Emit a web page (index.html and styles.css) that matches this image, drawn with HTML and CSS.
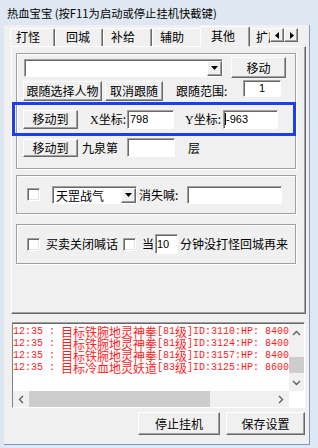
FILE: index.html
```html
<!DOCTYPE html>
<html lang="zh-CN">
<head>
    <meta charset="UTF-8">
    <title>热血宝宝</title>
    <link rel="stylesheet" href="styles.css">
</head>
<body>
    <div class="window">
        <div class="titlebar">热血宝宝 (按F11为启动或停止挂机快截键)</div>
        <div class="client">
            <div class="tabs">
                <div class="tab t1">打怪</div>
                <div class="tab t2">回城</div>
                <div class="tab t3">补给</div>
                <div class="tab t4">辅助</div>
                <div class="tab active">其他</div>
                <div class="tab t6">扩展</div>
                <div class="spin">
                    <span class="spin-btn"><svg width="5" height="7" viewBox="0 0 5 7"><path d="M4 0v7L0 3.5z" fill="#000"/></svg></span>
                    <span class="spin-btn"><svg width="5" height="7" viewBox="0 0 5 7"><path d="M1 0v7l4-3.5z" fill="#000"/></svg></span>
                </div>
            </div>

            <div class="panel">
                <div class="group g1">
                    <div class="row r1">
                        <div class="combo c-main">
                            <span class="combo-text"></span>
                            <span class="drop"><svg width="7" height="4" viewBox="0 0 7 4"><path d="M0 0h7L3.5 4z" fill="#000"/></svg></span>
                        </div>
                        <button class="btn b-move">移动</button>
                    </div>

                    <div class="row r2">
                        <button class="btn b-follow">跟随选择人物</button>
                        <button class="btn b-cancel">取消跟随</button>
                        <span class="label l-range">跟随范围:</span>
                        <span class="edit e-range">1</span>
                    </div>

                    <div class="row r3">
                        <button class="btn b-goto">移动到</button>
                        <span class="label l-x"><i>X</i>坐标:</span>
                        <span class="edit e-x">798</span>
                        <span class="label l-y"><i>Y</i>坐标:</span>
                        <span class="edit e-y"><b class="caret"></b>-963</span>
                    </div>

                    <div class="row r4">
                        <button class="btn b-goto2">移动到</button>
                        <span class="label l-floor">九泉第</span>
                        <span class="edit e-floor"></span>
                        <span class="label l-ceng">层</span>
                    </div>
                </div>

                <div class="group g2">
                    <span class="check c1"></span>
                    <div class="combo c-skill">
                        <span class="combo-text">天罡战气</span>
                        <span class="drop"><svg width="7" height="4" viewBox="0 0 7 4"><path d="M0 0h7L3.5 4z" fill="#000"/></svg></span>
                    </div>
                    <span class="label l-shout">消失喊:</span>
                    <span class="edit e-shout"></span>
                </div>

                <div class="group g3">
                    <span class="check c2"></span>
                    <span class="label l-trade">买卖关闭喊话</span>
                    <span class="check c3"></span>
                    <span class="label l-when">当</span>
                    <span class="edit e-min">10</span>
                    <span class="label l-back">分钟没打怪回城再来</span>
                </div>
            </div>

            <div class="log">
                <div class="log-inner">
                    <div class="lines">
                        <div class="line">12:35 : <span class="cn">目标铁腕地灵神拳</span>[81<span class="cn">级</span>]ID:3110:HP: 8400</div>
                        <div class="line">12:35 : <span class="cn">目标铁腕地灵神拳</span>[81<span class="cn">级</span>]ID:3124:HP: 8400</div>
                        <div class="line">12:35 : <span class="cn">目标铁腕地灵神拳</span>[81<span class="cn">级</span>]ID:3157:HP: 8400</div>
                        <div class="line">12:35 : <span class="cn">目标冷血地灵妖道</span>[83<span class="cn">级</span>]ID:3125:HP: 8600</div>
                    </div>
                    <div class="vscroll">
                        <span class="arrow"><svg width="9" height="6" viewBox="0 0 9 6"><path d="M1 5l3.5-3.5L8 5" fill="none" stroke="#606060" stroke-width="1.4"/></svg></span>
                        <span class="track t-top"></span>
                        <span class="thumb"></span>
                        <span class="track t-fill"></span>
                        <span class="arrow"><svg width="9" height="6" viewBox="0 0 9 6"><path d="M1 1l3.5 3.5L8 1" fill="none" stroke="#606060" stroke-width="1.4"/></svg></span>
                    </div>
                    <div class="hscroll">
                        <span class="arrow"><svg width="6" height="9" viewBox="0 0 6 9"><path d="M5 1L1.5 4.5 5 8" fill="none" stroke="#606060" stroke-width="1.4"/></svg></span>
                        <span class="thumb"></span>
                        <span class="track t-fill"></span>
                        <span class="arrow"><svg width="6" height="9" viewBox="0 0 6 9"><path d="M1 1l3.5 3.5L1 8" fill="none" stroke="#606060" stroke-width="1.4"/></svg></span>
                    </div>
                    <div class="corner"></div>
                </div>
            </div>

            <div class="actions">
                <button class="btn b-stop">停止挂机</button>
                <button class="btn b-save">保存设置</button>
            </div>
        </div>
    </div>
</body>
</html>
```

FILE: styles.css
```css
* {
    box-sizing: border-box;
}
body {
    margin: 0;
    width: 318px;
    height: 448px;
    overflow: hidden;
    background: #dfe8f2;
    font-family: "Noto Sans CJK SC", sans-serif;
    font-size: 12px;
    color: #000;
}
.window {
    display: flex;
    flex-direction: column;
    height: 448px;
}
.titlebar {
    height: 25px;
    padding-left: 7px;
    line-height: 27px;
    font-size: 11.3px;
    white-space: nowrap;
}
.client {
    flex: 1;
    margin: 0 8px 3px 4px;
    background: #f0f0f0;
    border-right: 1px solid #7a9cc4;
    border-bottom: 1px solid #7a9cc4;
    display: flex;
    flex-direction: column;
}

/* tabs */
.tabs {
    display: flex;
    align-items: flex-end;
    height: 21px;
    padding-left: 6px;
}
.tab {
    height: 18px;
    line-height: 16px;
    padding-left: 6px;
    background: #f0f0f0;
    border: 1px solid;
    border-color: #fff #696969 transparent #fff;
    border-bottom: 0;
    border-radius: 2px 2px 0 0;
    box-shadow: inset -1px 0 #a0a0a0;
    white-space: nowrap;
    overflow: hidden;
}
.t1 { width: 45px; padding-left: 5px; }
.t2 { width: 48px; padding-left: 10px; }
.t3 { width: 49px; padding-left: 7px; }
.t4 { width: 50px; padding-left: 7px; }
.t6 { width: 22px; padding-left: 7px; box-shadow: none; border-right: 0; }
.tab.active {
    position: relative;
    z-index: 1;
    width: 50px;
    height: 21px;
    line-height: 18px;
    margin: 0 -2px -1px;
    padding-left: 10px;
    border-bottom: 1px solid #f0f0f0;
}
.spin {
    display: flex;
    margin-bottom: 4px;
}
.spin-btn {
    width: 14px;
    height: 14px;
    display: flex;
    align-items: center;
    justify-content: center;
    background: #f0f0f0;
    border: 1px solid;
    border-color: #fff #696969 #696969 #fff;
    box-shadow: inset -1px -1px #a0a0a0;
}

/* tab page */
.panel {
    margin-left: 7px;
    width: 295px;
    height: 268px;
    border: 1px solid;
    border-color: #fff #696969 #696969 #fff;
    box-shadow: inset -1px -1px #a0a0a0;
    padding: 6px 0 0 4px;
}
.group {
    width: 280px;
    border: 1px solid #a0a0a0;
    box-shadow: 1px 1px 0 #fff, inset 1px 1px 0 #fff;
}
.g1 {
    height: 116px;
    padding-top: 3px;
}
.g2 {
    height: 39px;
    margin-top: 6px;
    display: flex;
    align-items: center;
}
.g3 {
    height: 40px;
    margin-top: 10px;
    display: flex;
    align-items: center;
}
.row {
    display: flex;
    align-items: center;
}
.r1 { height: 21px; }
.r2 { height: 21px; margin-top: 2px; align-items: flex-start; }
.r3 {
    height: 34px;
    margin: 1px -1px 0 -5px;
    border: 3px solid #1c3fe8;
}
.r4 { height: 19px; margin-top: 2px; }

/* controls */
.btn {
    font: inherit;
    color: #000;
    padding: 0;
    background: #f0f0f0;
    border: 1px solid;
    border-color: #fff #696969 #696969 #fff;
    box-shadow: inset -1px -1px #a0a0a0;
    line-height: 1;
    white-space: nowrap;
}
.edit {
    display: block;
    background: #fff;
    border: 1px solid;
    border-color: #a0a0a0 #fff #fff #a0a0a0;
    box-shadow: inset 1px 1px #696969;
    font: 11px "Liberation Sans", sans-serif;
    padding-left: 2px;
    white-space: nowrap;
}
.caret {
    display: inline-block;
    width: 1px;
    height: 12px;
    background: #000;
    vertical-align: -2px;
}
.label {
    display: block;
    white-space: nowrap;
    line-height: 16px;
}
.label i {
    font-style: normal;
    font-family: "Liberation Serif", serif;
}
.combo {
    display: flex;
    height: 18px;
    background: #fff;
    border: 1px solid;
    border-color: #a0a0a0 #fff #fff #a0a0a0;
    box-shadow: inset 1px 1px #696969;
    padding: 1px 0 0 1px;
}
.combo-text {
    flex: 1;
    padding-left: 2px;
    line-height: 15px;
    white-space: nowrap;
}
.drop {
    width: 15px;
    display: flex;
    align-items: center;
    justify-content: center;
    background: #f0f0f0;
    border: 1px solid;
    border-color: #fff #696969 #696969 #fff;
    box-shadow: inset -1px -1px #a0a0a0;
}
.check {
    display: block;
    width: 13px;
    height: 13px;
    background: #fff;
    border: 1px solid;
    border-color: #a0a0a0 #fff #fff #a0a0a0;
    box-shadow: inset 1px 1px #696969, inset -1px -1px #e3e3e3;
}

/* row 1 */
.c-main { width: 199px; margin-left: 7px; }
.b-move { width: 55px; height: 21px; margin-left: 8px; }

/* row 2 */
.b-follow { width: 79px; height: 20px; margin: 1px 0 0 6px; }
.b-cancel { width: 58px; height: 20px; margin: 1px 0 0 3px; }
.l-range { width: 57px; margin: 3px 0 0 13px; }
.e-range { width: 38px; height: 17px; margin-left: 10px; text-align: center; line-height: 15px; padding: 0; }

/* row 3 */
.b-goto { width: 55px; height: 19px; margin-left: 8px; }
.l-x { width: 35px; margin-left: 12px; }
.e-x { width: 47px; height: 19px; margin-left: 2px; line-height: 17px; }
.l-y { width: 36px; margin-left: 11px; }
.e-y { width: 55px; height: 19px; margin-left: 2px; line-height: 17px; padding-left: 1px; }

/* row 4 */
.b-goto2 { width: 55px; height: 18px; margin-left: 6px; }
.l-floor { width: 38px; margin-left: 2px; padding-left: 2px; }
.e-floor { width: 48px; height: 19px; margin-left: 9px; }
.l-ceng { margin-left: 13px; }

/* group 2 */
.c1 { margin-left: 10px; }
.c-skill { width: 85px; margin-left: 12px; }
.l-shout { width: 48px; margin-left: 2px; }
.e-shout { width: 95px; height: 18px; }

/* group 3 */
.c2 { margin-left: 10px; }
.l-trade { width: 71px; margin-left: 6px; }
.c3 { margin-left: 6px; }
.l-when { width: 13px; margin-left: 6px; }
.e-min { width: 23px; height: 20px; line-height: 18px; padding-left: 1px; }
.l-back { margin-left: 2px; }

/* log list */
.log {
    margin: 8px 0 0 8px;
    width: 293px;
    height: 86px;
    border: 1px solid;
    border-color: #a0a0a0 #fff #fff #828282;
}
.log-inner {
    height: 100%;
    display: grid;
    grid-template-columns: 1fr 15px;
    grid-template-rows: 1fr 16px;
    background: #fff;
    border-top: 1px solid #696969;
}
.lines {
    padding-top: 2px;
    overflow: hidden;
    color: #ff1c1c;
    font: 10px "Liberation Mono", monospace;
}
.line {
    height: 12px;
    line-height: 12px;
    white-space: nowrap;
}
.cn {
    font: 12px/12px "Noto Sans CJK SC", sans-serif;
    vertical-align: top;
}
.vscroll {
    display: flex;
    flex-direction: column;
    background: #f0f0f0;
}
.hscroll {
    display: flex;
    background: #f0f0f0;
}
.arrow {
    flex: none;
    width: 16px;
    height: 16px;
    display: flex;
    align-items: center;
    justify-content: center;
}
.vscroll .arrow { width: 15px; height: 17px; }
.vscroll .t-top { height: 16px; }
.vscroll .thumb { height: 16px; background: #cdcdcd; }
.hscroll .thumb { width: 181px; background: #cdcdcd; }
.t-fill { flex: 1; }
.corner {
    background: #fff;
}

/* bottom buttons */
.actions {
    display: flex;
    justify-content: flex-end;
    gap: 6px;
    margin-top: 4px;
    padding-right: 4px;
}
.b-stop { width: 82px; height: 23px; }
.b-save { width: 79px; height: 23px; }
```
